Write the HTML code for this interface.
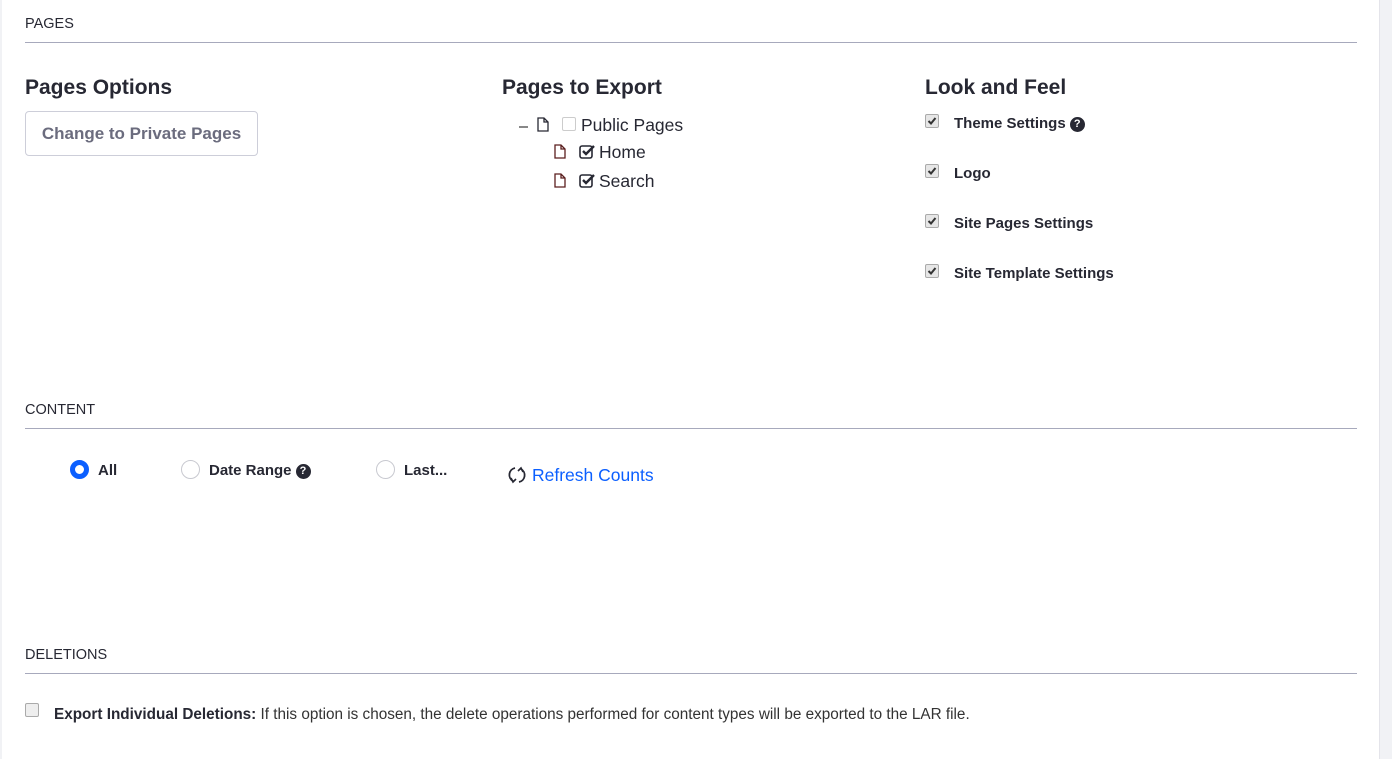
<!DOCTYPE html>
<html><head><style>
body{margin:0;width:1392px;height:759px;background:#fff;font-family:"Liberation Sans",sans-serif;color:#272833;position:relative;overflow:hidden}
.a{position:absolute;white-space:nowrap}
.sec{font-size:14.5px;color:#272833}
.hr{position:absolute;left:25px;width:1332px;height:1px;background:#a7a9bc}
.h{font-size:21px;font-weight:bold;color:#272833}
.cb{position:absolute;width:12px;height:12px;border:1px solid #aaa;border-radius:2px;background:#e6e6e6}
.cb svg{position:absolute;left:1px;top:1px}
.lbl{font-size:15px;font-weight:bold;color:#272833}
.q{display:inline-block;width:15px;height:15px;border-radius:50%;background:#272833;color:#fff;font-size:11px;text-align:center;line-height:15px;vertical-align:1px;margin-left:4px}
.radio{position:absolute;width:17px;height:17px;border:1px solid #c8c9d0;border-radius:50%;background:#fff}
</style></head><body>
<div class="a" style="left:1379px;top:0;width:13px;height:759px;background:#f1f2f5;border-left:1px solid #e4e4ea"></div>
<div class="a" style="left:0;top:0;width:2px;height:759px;background:#f1f2f5"></div>

<div class="a sec" style="left:25px;top:16px">PAGES</div>
<div class="hr" style="top:42px"></div>

<div class="a h" style="left:25px;top:76px">Pages Options</div>
<div class="a" style="left:25px;top:111px;width:231px;height:43px;border:1px solid #cdced9;border-radius:4px;font-size:17px;font-weight:bold;color:#6b6c7e;text-align:center;line-height:44px">Change to Private Pages</div>

<div class="a h" style="left:502px;top:76px">Pages to Export</div>
<div class="a" style="left:519px;top:126px;width:9px;height:2px;background:#888"></div>
<svg class="a" style="left:537px;top:117px" width="12" height="15"><path d="M1 1H7L11 5V14H1Z M7 1V5H11" fill="#fff" stroke="#272833" stroke-width="1.3"/></svg>
<div class="a" style="left:562px;top:117px;width:12px;height:12px;border:1px solid #ccc;border-radius:2px"></div>
<div class="a" style="left:581px;top:115px;font-size:17.5px">Public Pages</div>
<svg class="a" style="left:554px;top:144px" width="12" height="15"><path d="M1 1H7L11 5V14H1Z M7 1V5H11" fill="#fff" stroke="#5a1e1e" stroke-width="1.3"/></svg>
<svg class="a" style="left:579px;top:144px" width="17" height="15"><rect x="1" y="2" width="12" height="12" rx="2" fill="none" stroke="#272833" stroke-width="1.6"/><path d="M4 7L7 10L15 2" fill="none" stroke="#272833" stroke-width="2.4"/></svg>
<div class="a" style="left:599px;top:142px;font-size:17.5px">Home</div>
<svg class="a" style="left:554px;top:173px" width="12" height="15"><path d="M1 1H7L11 5V14H1Z M7 1V5H11" fill="#fff" stroke="#5a1e1e" stroke-width="1.3"/></svg>
<svg class="a" style="left:579px;top:173px" width="17" height="15"><rect x="1" y="2" width="12" height="12" rx="2" fill="none" stroke="#272833" stroke-width="1.6"/><path d="M4 7L7 10L15 2" fill="none" stroke="#272833" stroke-width="2.4"/></svg>
<div class="a" style="left:599px;top:171px;font-size:17.5px">Search</div>

<div class="a h" style="left:925px;top:76px">Look and Feel</div>
<div class="cb" style="left:925px;top:114px"><svg width="10" height="10"><path d="M1.5 5L4 7.5L8.5 2" fill="none" stroke="#333" stroke-width="2"/></svg></div>
<div class="a lbl" style="left:954px;top:115px">Theme Settings<span class="q">?</span></div>
<div class="cb" style="left:925px;top:164px"><svg width="10" height="10"><path d="M1.5 5L4 7.5L8.5 2" fill="none" stroke="#333" stroke-width="2"/></svg></div>
<div class="a lbl" style="left:954px;top:165px">Logo</div>
<div class="cb" style="left:925px;top:214px"><svg width="10" height="10"><path d="M1.5 5L4 7.5L8.5 2" fill="none" stroke="#333" stroke-width="2"/></svg></div>
<div class="a lbl" style="left:954px;top:215px">Site Pages Settings</div>
<div class="cb" style="left:925px;top:264px"><svg width="10" height="10"><path d="M1.5 5L4 7.5L8.5 2" fill="none" stroke="#333" stroke-width="2"/></svg></div>
<div class="a lbl" style="left:954px;top:265px">Site Template Settings</div>

<div class="a sec" style="left:25px;top:402px">CONTENT</div>
<div class="hr" style="top:428px"></div>
<div class="radio" style="left:70px;top:460px;border:5px solid #0b5fff;width:9px;height:9px"></div>
<div class="a lbl" style="left:98px;top:462px">All</div>
<div class="radio" style="left:181px;top:460px"></div>
<div class="a lbl" style="left:209px;top:462px">Date Range<span class="q">?</span></div>
<div class="radio" style="left:376px;top:460px"></div>
<div class="a lbl" style="left:404px;top:462px">Last...</div>
<svg class="a" style="left:507px;top:465px" width="20" height="20"><path d="M8 3A7 7 0 0 0 6 16M12 17A7 7 0 0 0 14 4" fill="none" stroke="#272833" stroke-width="1.8"/><path d="M4 13L6 17L9 14M16 7L14 3L11 6" fill="none" stroke="#272833" stroke-width="1.6"/></svg>
<div class="a" style="left:532px;top:465px;font-size:17.5px;color:#0b5fff">Refresh Counts</div>

<div class="a sec" style="left:25px;top:647px">DELETIONS</div>
<div class="hr" style="top:673px"></div>
<div class="cb" style="left:25px;top:703px;background:#eee"></div>
<div class="a" style="left:54px;top:706px;font-size:15.3px;color:#333"><b style="color:#272833">Export Individual Deletions:</b> If this option is chosen, the delete operations performed for content types will be exported to the LAR file.</div>
</body></html>
